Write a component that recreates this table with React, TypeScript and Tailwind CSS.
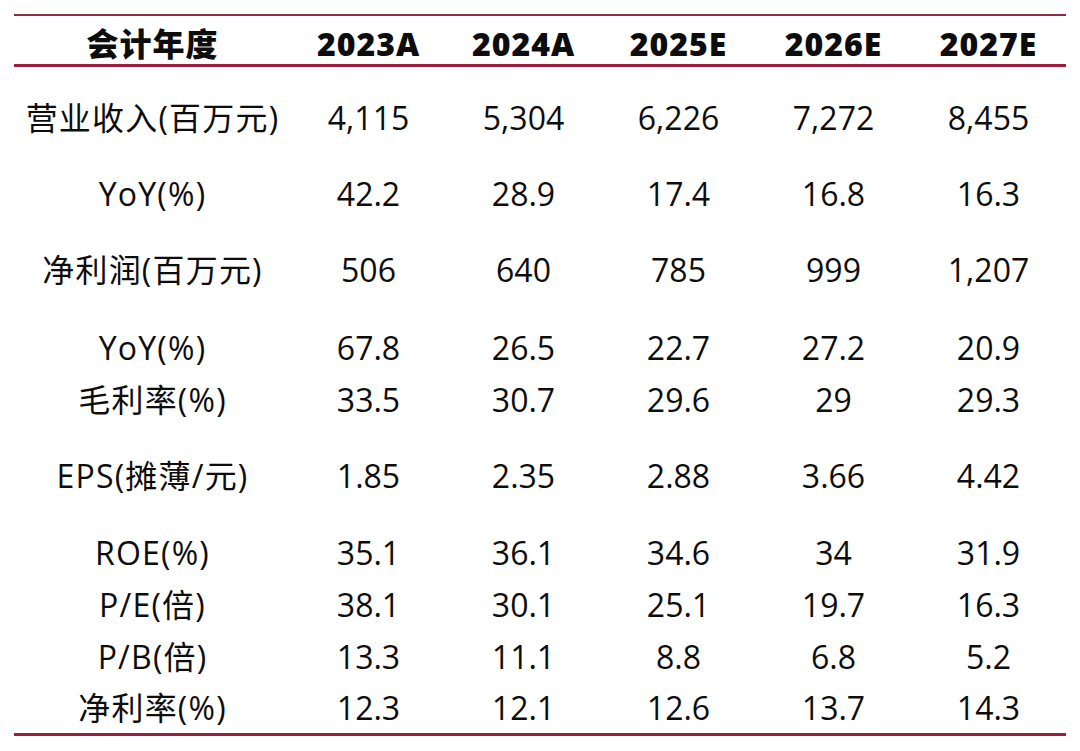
import React from 'react';

type Row = {
    label: string;
    values: string[];
    space: string;
    height: string;
};

const years = ['2023A', '2024A', '2025E', '2026E', '2027E'];

const rows: Row[] = [
    { label: '营业收入(百万元)', values: ['4,115', '5,304', '6,226', '7,272', '8,455'], space: 'mt-[25px]', height: 'h-[52px]' },
    { label: 'YoY(%)', values: ['42.2', '28.9', '17.4', '16.8', '16.3'], space: 'mt-[24px]', height: 'h-[52px]' },
    { label: '净利润(百万元)', values: ['506', '640', '785', '999', '1,207'], space: 'mt-[24px]', height: 'h-[52px]' },
    { label: 'YoY(%)', values: ['67.8', '26.5', '22.7', '27.2', '20.9'], space: 'mt-[26px]', height: 'h-[52px]' },
    { label: '毛利率(%)', values: ['33.5', '30.7', '29.6', '29', '29.3'], space: 'mt-0', height: 'h-[52px]' },
    { label: 'EPS(摊薄/元)', values: ['1.85', '2.35', '2.88', '3.66', '4.42'], space: 'mt-[24px]', height: 'h-[52px]' },
    { label: 'ROE(%)', values: ['35.1', '36.1', '34.6', '34', '31.9'], space: 'mt-[25px]', height: 'h-[52px]' },
    { label: 'P/E(倍)', values: ['38.1', '30.1', '25.1', '19.7', '16.3'], space: 'mt-0', height: 'h-[52px]' },
    { label: 'P/B(倍)', values: ['13.3', '11.1', '8.8', '6.8', '5.2'], space: 'mt-0', height: 'h-[52px]' },
    { label: '净利率(%)', values: ['12.3', '12.1', '12.6', '13.7', '14.3'], space: 'mt-0', height: 'h-[50px]' },
];

const App: React.FC = () => {
    return (
        <div className="w-[1080px] h-[751px] bg-white text-[#0d0d0d] font-['Open_Sans','Noto_Sans_CJK_SC',sans-serif] overflow-hidden">
            <div className="ml-[14px] w-[1052px] pt-[14px]">
                <div className="h-[2px] bg-[#8c2d48]" />

                {/* header */}
                <div className="grid grid-cols-[277px_repeat(5,155px)] h-[48px] pt-[8px] items-center text-[32px] font-extrabold tracking-[1px] leading-[40px]">
                    <div className="text-center">会计年度</div>
                    {years.map((y) => (
                        <div key={y} className="text-center">{y}</div>
                    ))}
                </div>

                <div className="h-[3px] bg-[#9e1c3f]" />

                {rows.map((row, i) => (
                    <div
                        key={i}
                        className={`grid grid-cols-[277px_repeat(5,155px)] items-center text-[32px] font-normal leading-[40px] ${row.space} ${row.height}`}
                    >
                        <div className="text-center whitespace-nowrap tracking-[1.2px]">{row.label}</div>
                        {row.values.map((v, j) => (
                            <div key={j} className="text-center">{v}</div>
                        ))}
                    </div>
                ))}

                <div className="h-[3px] bg-[#9e1c3f]" />
            </div>
        </div>
    );
};

export default App;
